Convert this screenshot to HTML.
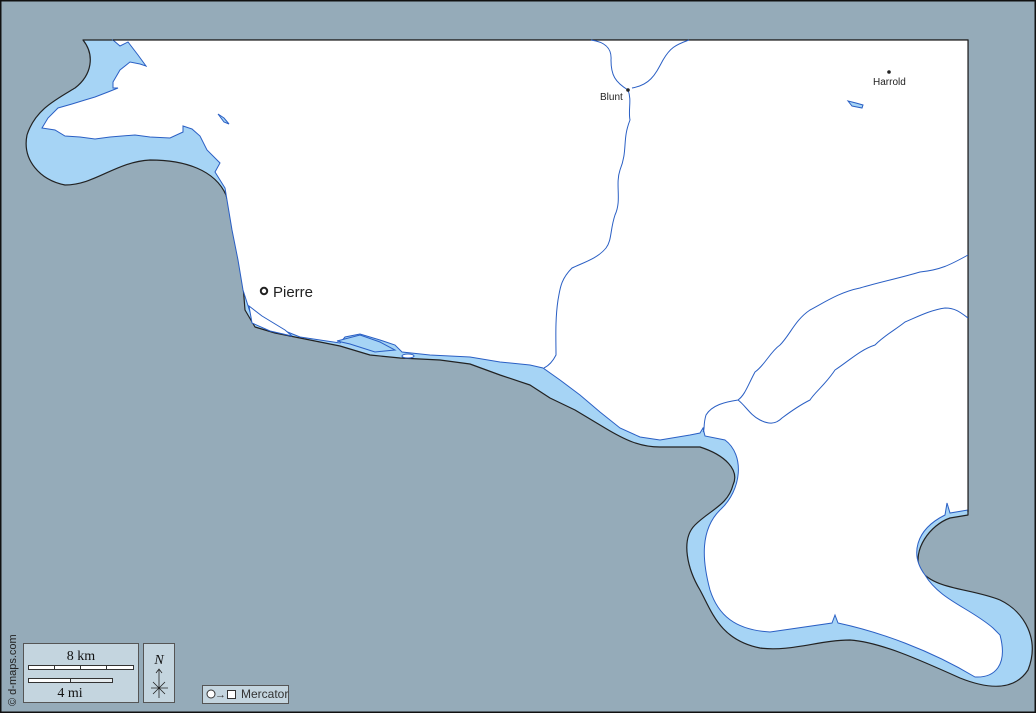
<!DOCTYPE html>
<html><head><meta charset="utf-8"><style>
html,body{margin:0;padding:0;}
body{width:1036px;height:713px;overflow:hidden;background:#95abb9;font-family:"Liberation Sans",sans-serif;}
svg{display:block}
</style></head><body>
<svg width="1036" height="713" viewBox="0 0 1036 713" xmlns="http://www.w3.org/2000/svg">
<rect x="0" y="0" width="1036" height="713" fill="#95abb9" stroke="#111" stroke-width="3"/>
<path d="M83,40 L968,40 L968,515 L950,518 C930,525 912,550 920,570 C935,590 970,588 1000,600 C1025,612 1040,640 1028,670 C1015,690 990,690 960,678 C920,660 880,642 850,640 C820,640 790,652 760,648 C720,640 712,612 700,590 C688,570 680,540 695,525 C710,510 728,505 733,485 C740,470 725,455 700,447 L660,447 C640,447 625,440 605,428 L575,410 L550,398 L530,385 L500,375 L470,364 L440,360 L400,358 L370,355 L340,346 L300,338 L275,333 L255,327 L245,310 L243,285 L238,240 L230,210 L226,195 C215,170 185,160 150,160 C115,162 95,185 65,185 C40,180 22,160 27,135 C35,110 55,100 75,88 C92,75 95,55 83,40 Z" fill="#a6d4f5" stroke="#222" stroke-width="1.2" stroke-linejoin="round"/>
<path d="M113,40 L120,46 L128,42 L138,55 L146,66 L140,64 L130,62 L120,70 L113,82 L113,88 L118,88 L108,92 L95,97 L85,100 L72,104 L58,108 L48,118 L42,128 L55,130 L65,136 L80,137 L95,139 L110,137 L135,135 L150,137 L170,138 L183,132 L183,126 L192,129 L200,136 L207,150 L220,163 L215,172 L225,188 L232,230 L238,260 L243,290 L250,312 L262,322 L290,333 L300,337 L340,343 L345,337 L360,334 L380,340 L395,345 L402,352 L430,355 L470,357 L500,362 L530,365 L543,368 L560,380 L580,395 L600,412 L620,428 L640,437 L660,440 L690,435 L700,433 L703,428 L705,436 L725,440 C745,455 742,490 720,510 C700,530 702,560 710,590 C718,615 735,630 770,632 L832,623 L835,615 L838,623 C880,632 930,650 975,677 C995,678 1008,665 1000,635 L993,628 C970,608 940,600 925,575 C910,555 915,530 945,515 L947,503 L950,513 L968,510 L968,40 Z" fill="#fff" stroke="#2a5fc4" stroke-width="1"/>
<path d="M113,40 L968,40 L968,512" fill="none" stroke="#222" stroke-width="1.2"/>
<path d="M249,306 L262,316 L285,330 L292,336 L270,331 L252,323 Z" fill="#fff" stroke="#2a5fc4" stroke-width="1"/>
<path d="M337,341 L360,335 L380,342 L395,350 L375,352 L350,344 Z" fill="#a6d4f5" stroke="#2a5fc4" stroke-width="1"/>
<ellipse cx="408" cy="356" rx="6" ry="2" fill="#fff" stroke="#2a5fc4" stroke-width="1"/>
<path d="M848,101 L856,103 L863,105 L862,108 L852,106 Z" fill="#a6d4f5" stroke="#2a5fc4" stroke-width="1"/>
<path d="M218,114 L224,118 L229,124 L224,122 Z" fill="#a6d4f5" stroke="#2a5fc4" stroke-width="1"/>
<g fill="none" stroke="#2a5fc4" stroke-width="1">
<path d="M591,40 C605,42 612,48 611,60 C611,75 615,82 628,90 C632,100 628,110 630,120 C622,140 628,150 620,170 C615,185 622,200 615,215 C610,230 612,240 606,248 C598,258 585,262 572,268 C560,280 560,290 558,300 C555,320 556,340 556,355 C552,363 548,366 544,368"/>
<path d="M689,40 C675,45 670,48 663,60 C655,75 650,85 632,88"/>
<path d="M968,255 C950,265 940,270 920,272 C900,278 880,282 860,288 C840,292 825,302 810,310 C795,320 790,335 780,345 C770,352 765,365 755,372 C748,385 745,395 738,400 C725,402 712,405 706,415 C703,425 705,430 703,432"/>
<path d="M968,318 C960,312 955,308 945,308 C930,310 915,318 905,322 C895,330 885,335 875,345 C860,350 850,360 835,370 C825,385 815,392 810,400 C800,405 790,412 782,418 C775,425 768,424 760,420 C750,415 745,405 738,400"/>
</g>
<circle cx="264" cy="291" r="3.2" fill="#fff" stroke="#222" stroke-width="2"/>
<text x="273" y="297" font-size="15" fill="#222">Pierre</text>
<circle cx="628" cy="90" r="1.8" fill="#222"/>
<text x="600" y="100" font-size="10" fill="#222">Blunt</text>
<circle cx="889" cy="72" r="1.8" fill="#222"/>
<text x="873" y="85" font-size="10" fill="#222">Harrold</text>
<text transform="translate(16,706) rotate(-90)" font-size="11" fill="#222">© d-maps.com</text>
<rect x="23.5" y="643.5" width="115" height="59" fill="#c4d5df" stroke="#555"/>
<text x="81" y="660" font-size="14" font-family="Liberation Serif,serif" text-anchor="middle" fill="#111">8 km</text>
<rect x="28.5" y="665.5" width="105" height="4" fill="#fff" stroke="#333" stroke-width="1"/>
<path d="M54.5,665 v5 M80.5,665 v5 M106.5,665 v5" stroke="#333"/>
<rect x="28.5" y="678.5" width="84" height="4" fill="#fff" stroke="#333" stroke-width="1"/>
<rect x="70.5" y="679" width="41.5" height="3" fill="#e6ecef"/>
<path d="M70.5,678 v5" stroke="#333"/>
<text x="70" y="697" font-size="14" font-family="Liberation Serif,serif" text-anchor="middle" fill="#111">4 mi</text>
<rect x="143.5" y="643.5" width="31" height="59" fill="#c4d5df" stroke="#555"/>
<text x="159" y="664" font-size="14" font-style="italic" font-family="Liberation Serif,serif" text-anchor="middle" fill="#111">N</text>
<path d="M159,670 v28 M156,673 l3,-4 l3,4 M151,688 h17 M153,682 l12,12 M165,682 l-12,12" stroke="#222" stroke-width="0.8" fill="none"/>
<rect x="202.5" y="685.5" width="86" height="18" fill="#c4d5df" stroke="#555"/>
<circle cx="211" cy="694" r="4" fill="#fff" stroke="#333"/>
<text x="215" y="698" font-size="11" fill="#333">→</text>
<rect x="227.5" y="690.5" width="8" height="8" fill="#fff" stroke="#333"/>
<text x="241" y="698" font-size="12" fill="#333">Mercator</text>
</svg>
</body></html>
